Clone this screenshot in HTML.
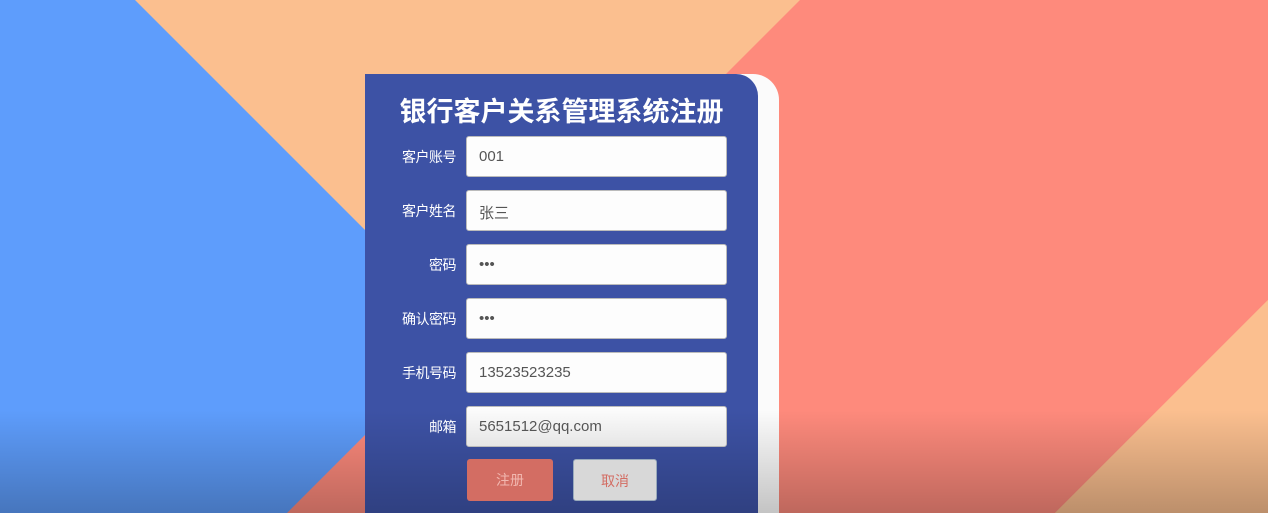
<!DOCTYPE html>
<html><head><meta charset="utf-8"><style>
*{margin:0;padding:0;box-sizing:border-box}
html,body{width:1268px;height:513px;overflow:hidden}
body{position:relative;font-family:"Liberation Sans","Noto Sans CJK SC",sans-serif}
svg.bg{position:absolute;left:0;top:0}
.shade{position:absolute;left:0;top:410px;width:1268px;height:103px;background:linear-gradient(rgba(0,0,0,0),rgba(0,0,0,0.25))}
.strip{position:absolute;left:380px;top:74px;width:399px;height:439px;background:#fbfbfb;border-top-right-radius:26px}
.panel{position:absolute;left:365px;top:74px;width:393px;height:439px;background:#3d52a5;border-top-right-radius:22px}
.pshade{position:absolute;left:365px;top:410px;width:414px;height:103px;background:linear-gradient(rgba(0,0,0,0),rgba(0,0,0,0.22))}
h1{position:absolute;left:365px;top:90px;width:393px;text-align:center;color:#fff;font-size:27px;font-weight:bold}
.lab{position:absolute;width:92px;left:364px;text-align:right;color:#fff;font-size:14px;letter-spacing:-0.5px}
.in{position:absolute;left:466px;width:261px;height:41px;background:#fdfdfd;border:1px solid #bbb;border-radius:3px;font-size:15px;color:#555;padding:11px 0 0 12px}
.btn{position:absolute;top:459px;height:42px;border-radius:3px;font-size:14px;text-align:center;line-height:42px}
</style></head><body>
<svg class="bg" width="1268" height="513">
<rect width="1268" height="513" fill="#fbbf8f"/>
<polygon points="0,0 135,0 648,513 0,513" fill="#5e9dfc"/>
<polygon points="800,0 1268,0 1268,300 1055,513 287,513" fill="#fe8a7c"/>
<polygon points="1268,300 1268,513 1055,513" fill="#fbbf8f"/>
</svg>
<div class="shade"></div>
<div class="strip"></div>
<div class="panel"></div>
<div class="pshade"></div>
<h1>银行客户关系管理系统注册</h1>
<div class="lab" style="top:147px">客户账号</div><div class="in" style="top:136px">001</div>
<div class="lab" style="top:201px">客户姓名</div><div class="in" style="top:190px">张三</div>
<div class="lab" style="top:255px">密码</div><div class="in" style="top:244px">•••</div>
<div class="lab" style="top:309px">确认密码</div><div class="in" style="top:298px">•••</div>
<div class="lab" style="top:363px">手机号码</div><div class="in" style="top:352px">13523523235</div>
<div class="lab" style="top:417px">邮箱</div><div class="in" style="top:406px;background:linear-gradient(#fdfdfd,#e6e6e6)">5651512@qq.com</div>
<div class="btn" style="left:467px;width:86px;background:#d36d63;color:#f2b8b0">注册</div>
<div class="btn" style="left:573px;width:84px;background:#d8d8d8;color:#d36d63;border:1px solid #9ab">取消</div>
</body></html>
